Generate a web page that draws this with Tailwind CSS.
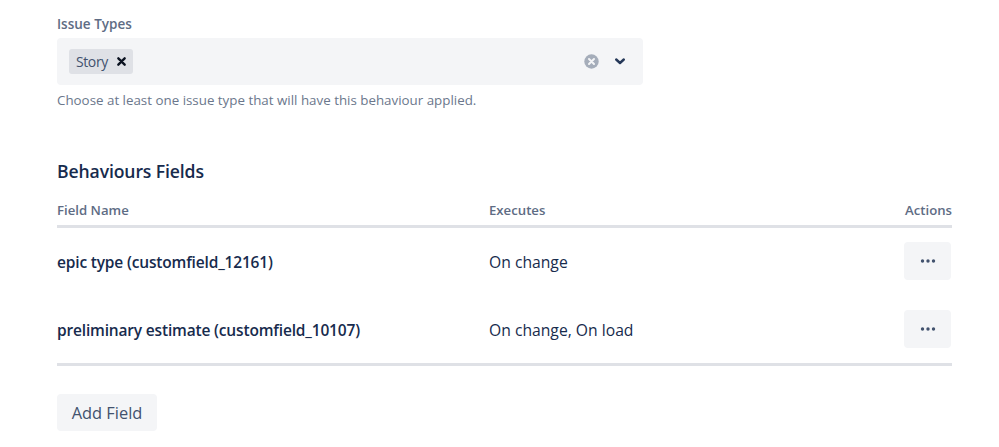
<!DOCTYPE html>
<html><head><meta charset="utf-8"><script src="https://cdn.jsdelivr.net/npm/@tailwindcss/browser@4"></script></head>
<body class="bg-white overflow-hidden">
<main class="w-[999px] h-[447px] pl-[57px] pr-[47px] pt-[15px] font-['Open_Sans','Noto_Sans',sans-serif] text-[#172b4d]">
<label class="block h-[23px] leading-[18px] text-[13.5px] font-semibold text-[#5e6c84]">Issue Types</label>
<div class="w-[586px] h-[47px] bg-[#f4f5f7] rounded-[4px] flex items-center pl-3 pr-[18px]">
  <span class="h-[25px] bg-[#dfe1e6] rounded-[3px] flex items-center pl-[7px] pr-[7px] gap-[9px] text-[14px] tracking-[-0.4px] text-[#42526e]">Story
    <svg class="w-[9px] h-[9px]" viewBox="0 0 10 10"><path d="M1.5 1.5l7 7M8.5 1.5l-7 7" stroke="#0b1220" stroke-width="2.6" stroke-linecap="round"/></svg>
  </span>
  <svg class="ml-auto w-[15px] h-[15px]" viewBox="0 0 15 15"><circle cx="7.5" cy="7.5" r="7.2" fill="#a5adba"/><path d="M5 5l5 5M10 5l-5 5" stroke="#f4f5f7" stroke-width="2" stroke-linecap="round"/></svg>
  <svg class="ml-[16px] w-[10px] h-[7px]" viewBox="0 0 10 7"><path d="M1.2 1.5L5 5l3.8-3.5" fill="none" stroke="#253858" stroke-width="2.4" stroke-linecap="round" stroke-linejoin="round"/></svg>
</div>
<p class="mt-[5px] h-[20px] leading-[20px] text-[13.35px] text-[#6b778c]">Choose at least one issue type that will have this behaviour applied.</p>
<h2 class="mt-[49px] leading-[24px] text-[17.6px] tracking-[-0.12px] font-semibold text-[#172b4d]">Behaviours Fields</h2>
<table class="w-[895px] mt-[14px] table-fixed border-collapse">
  <thead>
    <tr class="h-[29px] border-b-[3px] border-[#dfe1e6] text-[13.2px] text-[#5e6c84] align-top">
      <th class="w-[432px] p-0 pt-[4px] text-left font-semibold">Field Name</th>
      <th class="p-0 pt-[4px] text-left font-semibold">Executes</th>
      <th class="w-[80px] p-0 pt-[4px] text-right font-semibold">Actions</th>
    </tr>
  </thead>
  <tbody class="text-[15.7px]">
    <tr class="h-[69px]">
      <td class="p-0 pt-[2px] text-[15.5px] tracking-[-0.17px] font-semibold">epic type (customfield_12161)</td>
      <td class="p-0 pt-[3px]">On change</td>
      <td class="p-0"><button class="ml-auto mr-px w-[47px] h-[38px] bg-[#f4f5f7] rounded-[4px] flex items-center justify-center"><svg class="w-[16px] h-[4px]" viewBox="0 0 16 4"><circle cx="2.5" cy="2" r="1.7" fill="#42526e"/><circle cx="8" cy="2" r="1.7" fill="#42526e"/><circle cx="13.5" cy="2" r="1.7" fill="#42526e"/></svg></button></td>
    </tr>
    <tr class="h-[69px] border-b-[3px] border-[#dfe1e6]">
      <td class="p-0 pt-[3px] text-[15.5px] tracking-[-0.17px] font-semibold">preliminary estimate (customfield_10107)</td>
      <td class="p-0 pt-[4px]">On change, On load</td>
      <td class="p-0"><button class="ml-auto mr-px w-[47px] h-[38px] bg-[#f4f5f7] rounded-[4px] flex items-center justify-center"><svg class="w-[16px] h-[4px]" viewBox="0 0 16 4"><circle cx="2.5" cy="2" r="1.7" fill="#42526e"/><circle cx="8" cy="2" r="1.7" fill="#42526e"/><circle cx="13.5" cy="2" r="1.7" fill="#42526e"/></svg></button></td>
    </tr>
  </tbody>
</table>
<button class="mt-[28px] w-[100px] h-[37px] pt-[2px] bg-[#f4f5f7] rounded-[4px] text-[16.4px] font-medium text-[#42526e]">Add Field</button>
</main>
</body></html>
